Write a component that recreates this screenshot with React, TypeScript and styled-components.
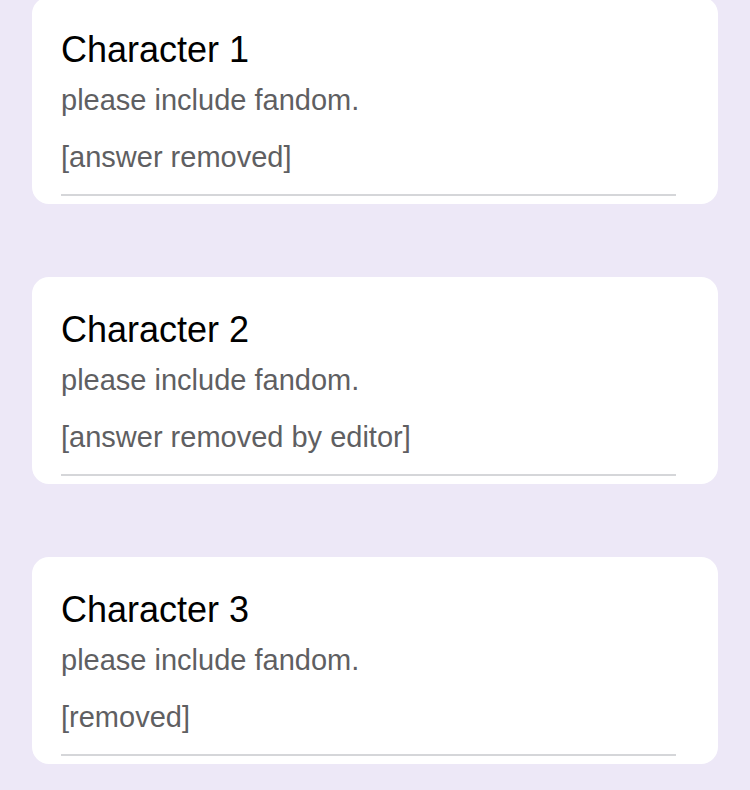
import React from "react";
import styled, { createGlobalStyle } from "styled-components";

const GlobalStyle = createGlobalStyle`
  html, body {
    margin: 0;
    padding: 0;
    background: #ede8f7;
  }
  body {
    font-family: "Liberation Sans", Arial, sans-serif;
    -webkit-font-smoothing: antialiased;
  }
`;

const Page = styled.div`
  display: flex;
  flex-direction: column;
  gap: 73px;
  padding: 0 32px 24px;
  margin-top: -3px;
`;

const Card = styled.section`
  background: #ffffff;
  border-radius: 17px;
  padding: 31px 42px 8px 29px;
  display: flex;
  flex-direction: column;
`;

const Title = styled.h2`
  margin: 0;
  font-size: 36px;
  line-height: 44px;
  font-weight: 400;
  color: #000000;
`;

const Hint = styled.p`
  margin: 11px 0 0;
  font-size: 29px;
  line-height: 34px;
  color: #5f5f62;
`;

const Answer = styled.div`
  margin-top: 23px;
  padding-bottom: 20px;
  font-size: 29px;
  line-height: 34px;
  color: #5f5f62;
  border-bottom: 2px solid #d5d6d9;
`;

interface Question {
  id: number;
  answer: string;
}

const questions: Question[] = [
  { id: 1, answer: "[answer removed]" },
  { id: 2, answer: "[answer removed by editor]" },
  { id: 3, answer: "[removed]" },
];

const App: React.FC = () => {
  return (
    <>
      <GlobalStyle />
      <Page>
        {questions.map((q) => (
          <Card key={q.id}>
            <Title>Character {q.id}</Title>
            <Hint>please include fandom.</Hint>
            <Answer>{q.answer}</Answer>
          </Card>
        ))}
      </Page>
    </>
  );
};

export default App;
